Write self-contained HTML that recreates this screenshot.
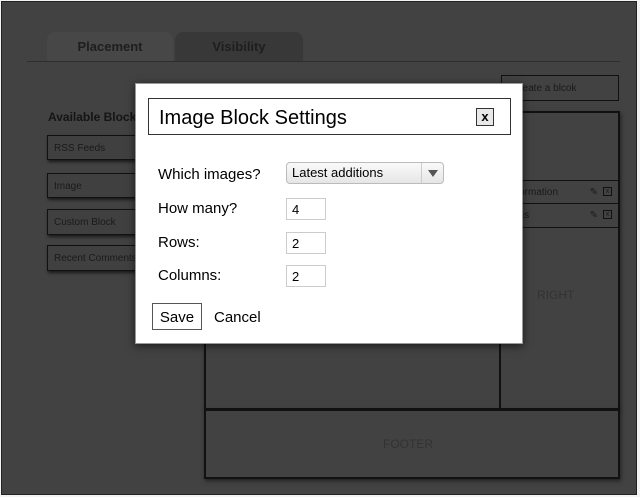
<!DOCTYPE html>
<html><head><style>
*{box-sizing:border-box;margin:0;padding:0}
body{width:640px;height:497px;background:#f2f2f2;font-family:"Liberation Sans",Arial,sans-serif;position:relative;overflow:hidden}
.a{position:absolute}
#frame{left:1px;top:1px;width:636px;height:494px;background:#424242;border:1px solid #222}
.tab{border-radius:8px 8px 0 0;font-weight:bold;font-size:13px;color:#1e1e1e;text-align:center;line-height:30px}
.blk{background:#404040;border:1px solid #111;box-shadow:1px 2px 3px rgba(0,0,0,.6);font-size:10px;color:#1a1a1a;padding-left:6px}
.box{border:2px solid #111;background:#424242}
.lbl{font-size:15px;color:#000}
.inp{background:#fff;border:1px solid #ccc;font-size:13px;padding-left:5px;line-height:21px}
</style></head><body>
<div id="frame" class="a"></div>
<div class="a tab" style="left:47px;top:32px;width:126px;height:30px;background:#474747">Placement</div>
<div class="a tab" style="left:175px;top:32px;width:128px;height:29px;background:#383838">Visibility</div>
<div class="a" style="left:27px;top:61px;width:593px;height:1px;background:#2e2e2e"></div>
<div class="a" style="left:48px;top:110px;font-weight:bold;font-size:12px;color:#151515">Available Blocks</div>
<div class="a blk" style="left:47px;top:135px;width:110px;height:25px;line-height:25px">RSS Feeds</div>
<div class="a blk" style="left:47px;top:173px;width:110px;height:25px;line-height:25px">Image</div>
<div class="a blk" style="left:47px;top:209px;width:110px;height:26px;line-height:26px">Custom Block</div>
<div class="a blk" style="left:47px;top:245px;width:110px;height:26px;line-height:26px">Recent Comments</div>
<div class="a" style="left:501px;top:75px;width:118px;height:26px;border:1px solid #111;font-size:10px;color:#1a1a1a;line-height:25px;padding-left:10px">Create a blcok</div>
<div class="a box" style="left:204px;top:111px;width:416px;height:299px;box-shadow:1px 2px 4px rgba(0,0,0,.5)"></div>
<div class="a" style="left:499px;top:112px;width:2px;height:297px;background:#111"></div>
<div class="a" style="left:500px;top:180px;width:118px;height:24px;border-top:1px solid #111;border-bottom:1px solid #111;font-size:10px;color:#1a1a1a;line-height:23px;padding-left:8px">Information<span style="position:absolute;right:6px;top:6px;width:9px;height:9px;border:1px solid #111;font-size:7px;line-height:7px;text-align:center">x</span><span style="position:absolute;right:20px;top:0">✎</span></div>
<div class="a" style="left:500px;top:204px;width:118px;height:24px;border-bottom:1px solid #111;font-size:10px;color:#1a1a1a;line-height:23px;padding-left:8px">Tags<span style="position:absolute;right:6px;top:6px;width:9px;height:9px;border:1px solid #111;font-size:7px;line-height:7px;text-align:center">x</span><span style="position:absolute;right:20px;top:0">✎</span></div>
<div class="a" style="left:537px;top:288px;font-size:12px;color:#333">RIGHT</div>
<div class="a box" style="left:204px;top:409px;width:416px;height:70px;box-shadow:1px 2px 4px rgba(0,0,0,.5)"></div>
<div class="a" style="left:383px;top:437px;font-size:12px;color:#333">FOOTER</div>
<div class="a" style="left:135px;top:83px;width:388px;height:261px;background:#fff;border:1px solid #999;box-shadow:0 2px 8px rgba(0,0,0,.6)"></div>
<div class="a" style="left:148px;top:98px;width:363px;height:37px;border:1px solid #333;font-size:20px;line-height:38px;padding-left:10px">Image Block Settings</div>
<div class="a" style="left:476px;top:108px;width:18px;height:18px;border:1px solid #333;background:#e8e8e8;font-weight:bold;font-size:13px;line-height:16px;text-align:center">x</div>
<div class="a lbl" style="left:158px;top:166px">Which images?</div>
<div class="a lbl" style="left:158px;top:200px">How many?</div>
<div class="a lbl" style="left:158px;top:234px">Rows:</div>
<div class="a lbl" style="left:158px;top:267px">Columns:</div>
<div class="a" style="left:286px;top:162px;width:158px;height:22px;border:1px solid #bbb;border-radius:4px;background:linear-gradient(#fafafa,#e6e6e6);font-size:13px;line-height:20px;padding-left:5px">Latest additions<div class="a" style="left:134px;top:0;width:1px;height:20px;background:#ccc"></div><div class="a" style="left:141px;top:7px;width:0;height:0;border-left:5px solid transparent;border-right:5px solid transparent;border-top:7px solid #555"></div></div>
<div class="a inp" style="left:286px;top:198px;width:40px;height:22px">4</div>
<div class="a inp" style="left:286px;top:232px;width:40px;height:22px">2</div>
<div class="a inp" style="left:286px;top:265px;width:40px;height:22px">2</div>
<div class="a" style="left:152px;top:303px;width:50px;height:27px;border:1px solid #555;font-size:15px;line-height:27px;text-align:center">Save</div>
<div class="a lbl" style="left:214px;top:309px">Cancel</div>
</body></html>
